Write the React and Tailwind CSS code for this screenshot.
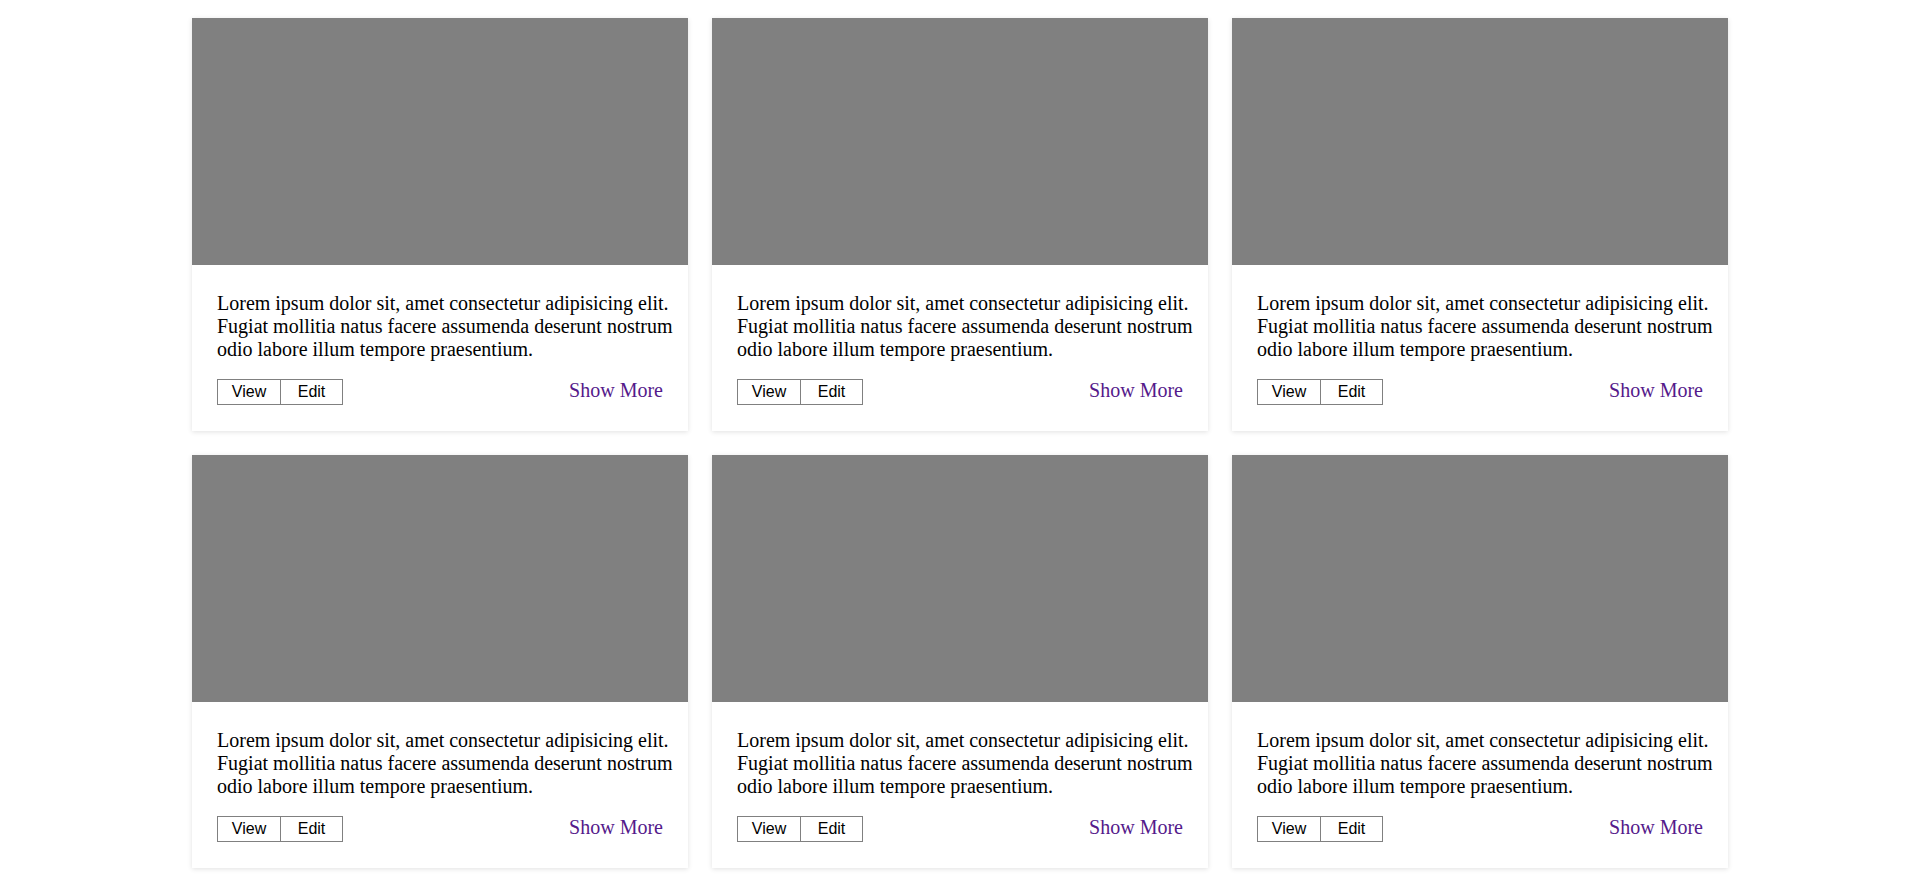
import React from "react";

const cards = Array.from({ length: 6 }, (_, i) => i);

const Card = () => (
  <div className="bg-white shadow-[0_1px_5px_rgba(0,0,0,0.12)]">
    <div className="h-[247px] bg-[#808080]" />
    <div className="px-[25px] pt-[27px] pb-[26px]">
      <p className="-mr-[14px] text-[20px] leading-[23px] text-black">
        Lorem ipsum dolor sit, amet consectetur adipisicing elit. Fugiat
        mollitia natus facere assumenda deserunt nostrum odio labore illum
        tempore praesentium.
      </p>
      <div className="mt-[17px] flex items-center justify-between">
        <div className="flex">
          <button className="h-[26px] w-[64px] border border-[#808080] bg-white text-[16px] text-black font-['Liberation_Sans',Arial,sans-serif]">
            View
          </button>
          <button className="-ml-px h-[26px] w-[63px] border border-[#808080] bg-white text-[16px] text-black font-['Liberation_Sans',Arial,sans-serif]">
            Edit
          </button>
        </div>
        <a href="#" className="text-[20px] text-[#551a8b] -mt-[3px]">
          Show More
        </a>
      </div>
    </div>
  </div>
);

export default function App() {
  return (
    <div className="min-h-screen bg-white font-['Liberation_Serif','Times_New_Roman',serif]">
      <div className="mx-auto grid max-w-[1536px] grid-cols-3 gap-6 pt-[18px] pb-6">
        {cards.map((i) => (
          <Card key={i} />
        ))}
      </div>
    </div>
  );
}
